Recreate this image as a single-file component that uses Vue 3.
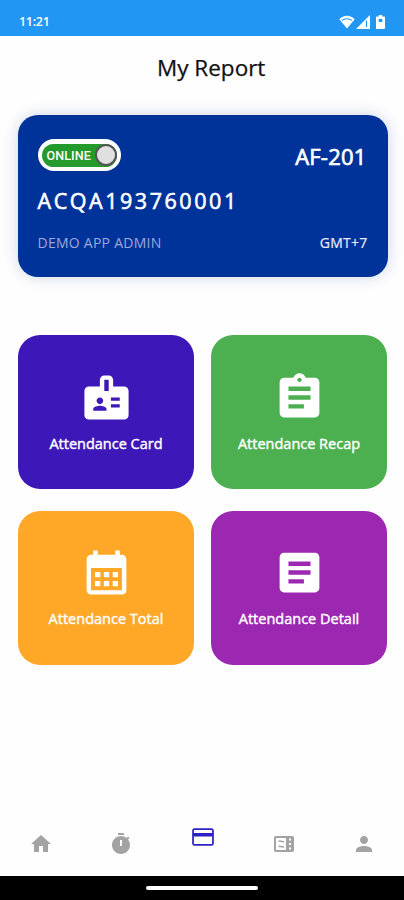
<template>
    <div class="screen">
        <header class="status-bar">
            <span class="time">11:21</span>
            <div class="status-icons">
                <svg class="wifi" viewBox="0 0 16 14">
                    <path d="M8 13.600.3 4.200C2.400 1.900 5 .7 8 .7s5.600 1.200 7.700 3.500z" fill="#fff" />
                    <path d="M3 5.400C5.800 3.200 10.200 3.200 13 5.400" fill="none" stroke="#2196f3" stroke-width="1.200" />
                </svg>
                <svg class="signal" viewBox="0 0 14 14">
                    <path d="M14 0v14H0z" fill="#fff" />
                    <path d="M10.500 5.500v6.500" stroke="#2196f3" stroke-width="1.200" />
                </svg>
                <svg class="battery" viewBox="0 0 9 14">
                    <path d="M2.800 0h3.400v1.500H8c.6 0 1 .4 1 1V13c0 .6-.4 1-1 1H1c-.6 0-1-.4-1-1V2.500c0-.6.4-1 1-1h1.800z" fill="#fff" />
                    <path d="M2.700 4h3.600v3H2.700z" fill="#2196f3" />
                </svg>
            </div>
        </header>

        <h1 class="title">My Report</h1>

        <section class="card">
            <div class="card-row card-top">
                <button class="toggle" @click="online = !online">
                    <span class="toggle-track">
                        <span class="toggle-text">{{ online ? 'ONLINE' : 'OFFLINE' }}</span>
                        <span class="knob"></span>
                    </span>
                </button>
                <span class="device">AF-201</span>
            </div>
            <div class="serial">ACQA193760001</div>
            <div class="card-row card-bottom">
                <span class="user">DEMO APP ADMIN</span>
                <span class="zone">GMT+7</span>
            </div>
        </section>

        <section class="tiles">
            <div v-for="tile in tiles" :key="tile.label" class="tile" :class="tile.color">
                <svg class="tile-icon" viewBox="0 0 24 24">
                    <path :d="tile.icon" fill-rule="evenodd" />
                </svg>
                <span class="tile-label">{{ tile.label }}</span>
            </div>
        </section>

        <nav class="nav">
            <div v-for="item in navItems" :key="item.name" class="nav-item" :class="{ active: active === item.name }" @click="active = item.name">
                <svg viewBox="0 0 24 24">
                    <path :d="item.icon" fill-rule="evenodd" />
                </svg>
            </div>
        </nav>

        <footer class="gesture-bar">
            <div class="gesture-pill"></div>
        </footer>
    </div>
</template>

<script setup>
import { ref } from 'vue';

const online = ref(true);
const active = ref('card');

const tiles = [
    {
        label: 'Attendance Card',
        color: 'indigo',
        icon: 'M20 7h-5V4c0-1.100-.9-2-2-2h-2c-1.100 0-2 .9-2 2v3H4c-1.100 0-2 .9-2 2v11c0 1.100.9 2 2 2h16c1.100 0 2-.9 2-2V9c0-1.100-.9-2-2-2zM9 12c.83 0 1.500.67 1.500 1.500S9.830 15 9 15s-1.500-.67-1.500-1.500S8.170 12 9 12zm3 6H6v-.75c0-1 2-1.500 3-1.500s3 .5 3 1.500V18zm1-9h-2V4h2v5zm5 7.500h-4V15h4v1.500zm0-3h-4V12h4v1.500z',
    },
    {
        label: 'Attendance Recap',
        color: 'green',
        icon: 'M19 3h-4.180C14.400 1.840 13.300 1 12 1c-1.300 0-2.400.84-2.820 2H5c-1.100 0-2 .9-2 2v14c0 1.100.9 2 2 2h14c1.100 0 2-.9 2-2V5c0-1.100-.9-2-2-2zm-7 0c.55 0 1 .45 1 1s-.45 1-1 1-1-.45-1-1 .45-1 1-1zm2 14H7v-2h7v2zm3-4H7v-2h10v2zm0-4H7V7h10v2z',
    },
    {
        label: 'Attendance Total',
        color: 'orange',
        icon: 'M19 4h-1V2h-2v2H8V2H6v2H5c-1.110 0-1.990.9-1.990 2L3 20c0 1.100.89 2 2 2h14c1.100 0 2-.9 2-2V6c0-1.100-.9-2-2-2zm0 16H5V10h14v10zM9.200 14.200H6.800v-2.400h2.400zm4 0h-2.400v-2.400h2.400zm4 0h-2.400v-2.400h2.400zm-8 4H6.800v-2.400h2.400zm4 0h-2.400v-2.400h2.400zm4 0h-2.400v-2.400h2.400z',
    },
    {
        label: 'Attendance Detail',
        color: 'purple',
        icon: 'M19 3H5c-1.100 0-2 .9-2 2v14c0 1.100.9 2 2 2h14c1.100 0 2-.9 2-2V5c0-1.100-.9-2-2-2zm-5 14H7v-2h7v2zm3-4H7v-2h10v2zm0-4H7V7h10v2z',
    },
];

const navItems = [
    { name: 'home', icon: 'M10 20v-6h4v6h5v-8h3L12 3 2 12h3v8z' },
    {
        name: 'timer',
        icon: 'M15 1H9v2h6V1zm-4 13h2V8h-2v6zm8.030-6.610l1.420-1.420c-.43-.51-.9-.99-1.410-1.410l-1.420 1.420C16.070 4.740 14.120 4 12 4c-4.970 0-9 4.030-9 9s4.020 9 9 9 9-4.030 9-9c0-2.120-.74-4.070-1.970-5.610z',
    },
    {
        name: 'card',
        icon: 'M20 4H4c-1.110 0-1.990.89-1.990 2L2 18c0 1.110.89 2 2 2h16c1.110 0 2-.89 2-2V6c0-1.110-.89-2-2-2zm.4 14.400H3.600V11.500h16.800v6.900zm0-10.200H3.600V5.600h16.800v2.600z',
    },
    {
        name: 'ticket',
        icon: 'M20 4H4c-1.100 0-2 .9-2 2v12c0 1.100.9 2 2 2h16c1.100 0 2-.9 2-2V6c0-1.100-.9-2-2-2zM4 6H14v12H4zM6.500 8.200l5.500.8v1.600l-5.500-.8zM6.500 13.400l5.500.8v1.600l-5.500-.8zM17 6.500h2v2h-2zM17 11h2v2h-2zM17 15.500h2v2h-2z',
    },
    {
        name: 'profile',
        icon: 'M12 12c2.210 0 4-1.790 4-4s-1.790-4-4-4-4 1.790-4 4 1.790 4 4 4zm0 2c-2.670 0-8 1.340-8 4v2h16v-2c0-2.660-5.330-4-8-4z',
    },
];
</script>

<style>
body {
    margin: 0;
    background: #fff;
}
</style>

<style scoped>
.screen {
    display: flex;
    flex-direction: column;
    width: 404px;
    height: 900px;
    overflow: hidden;
    background: #fefefe;
    font-family: "Open Sans", "Noto Sans", sans-serif;
}

.status-bar {
    display: flex;
    flex: none;
    justify-content: space-between;
    align-items: center;
    box-sizing: border-box;
    height: 35.5px;
    padding: 8px 19.5px 0 19px;
    background: #2196f3;
    color: #fff;
}

.time {
    font-size: 12.5px;
    font-weight: 600;
    letter-spacing: -0.3px;
}

.status-icons {
    display: flex;
    align-items: center;
}

.wifi {
    width: 16px;
    height: 14px;
}

.signal {
    width: 14px;
    height: 14px;
    margin-left: 1px;
}

.battery {
    width: 9px;
    height: 14px;
    margin-left: 6px;
}

.title {
    flex: none;
    height: 30px;
    margin: 17px 0 0 157px;
    color: #111;
    font-size: 22.5px;
    font-weight: 400;
    line-height: 30px;
    -webkit-text-stroke: 0.25px #111;
}

.card {
    flex: none;
    box-sizing: border-box;
    width: 370px;
    height: 162px;
    margin: 32px 0 0 17.5px;
    padding: 24.5px 20px 0;
    border-radius: 20px;
    background: #003399;
    box-shadow: 0 0 16px rgba(0, 51, 120, 0.2);
    color: #fff;
}

.card-row {
    display: flex;
    justify-content: space-between;
    align-items: center;
}

.toggle {
    width: 83px;
    height: 32px;
    padding: 4.5px 4px;
    border: 0;
    border-radius: 16px;
    background: #fff;
}

.toggle-track {
    display: flex;
    justify-content: space-between;
    align-items: center;
    height: 23px;
    padding-left: 5px;
    border-radius: 12px;
    background: #259a2c;
}

.toggle-text {
    color: #fff;
    font-family: Roboto, sans-serif;
    font-size: 12.5px;
    font-weight: 500;
    letter-spacing: 0.1px;
}

.knob {
    box-sizing: border-box;
    width: 22px;
    height: 22px;
    border: 2px solid #555;
    border-radius: 50%;
    background: #e0e0e0;
}

.device {
    padding: 2px 1px 0 0;
    font-size: 22px;
    font-weight: 500;
    letter-spacing: 0.2px;
    -webkit-text-stroke: 0.7px #fff;
}

.serial {
    height: 30px;
    margin-top: 15px;
    font-size: 21.5px;
    font-weight: 500;
    letter-spacing: 2.55px;
    line-height: 30px;
    -webkit-text-stroke: 0.6px #fff;
}

.card-bottom {
    height: 20px;
    margin-top: 16px;
    font-size: 14px;
}

.user {
    color: #9ca9db;
    letter-spacing: 0.25px;
}

.zone {
    color: #e8ebfa;
    letter-spacing: 0.25px;
    -webkit-text-stroke: 0.2px #e8ebfa;
}

.tiles {
    display: grid;
    flex: none;
    grid-template-columns: 176px 176px;
    grid-auto-rows: 154px;
    gap: 21.5px 17px;
    margin: 58.5px 0 0 18px;
}

.tile {
    display: flex;
    flex-direction: column;
    align-items: center;
    box-sizing: border-box;
    padding-top: 35.5px;
    border-radius: 22px;
    color: #fff;
}

.indigo {
    background: #3d17b7;
}

.green {
    background: #4caf50;
}

.orange {
    background: #ffa827;
}

.purple {
    background: #9c27b0;
}

.tile-icon {
    width: 53px;
    height: 53px;
    fill: #fff;
}

.tile-label {
    margin-top: 10px;
    font-size: 14.5px;
    font-weight: 500;
    line-height: 20px;
    white-space: nowrap;
    -webkit-text-stroke: 0.4px #fff;
}

.nav {
    display: flex;
    flex: none;
    height: 60px;
    margin-top: auto;
}

.nav-item {
    display: flex;
    flex: 1;
    justify-content: center;
    align-items: center;
    box-sizing: border-box;
    padding: 0 0 4px 1px;
}

.nav-item svg {
    width: 24px;
    height: 24px;
    fill: #a3a3a3;
}

.nav-item.active {
    padding: 0 0 19px 2px;
}

.nav-item.active svg {
    width: 26px;
    height: 26px;
    fill: #2d20c4;
}

.gesture-bar {
    display: flex;
    flex: none;
    justify-content: center;
    align-items: center;
    height: 24px;
    background: #000;
}

.gesture-pill {
    width: 112px;
    height: 4px;
    border-radius: 2px;
    background: #fff;
}
</style>
